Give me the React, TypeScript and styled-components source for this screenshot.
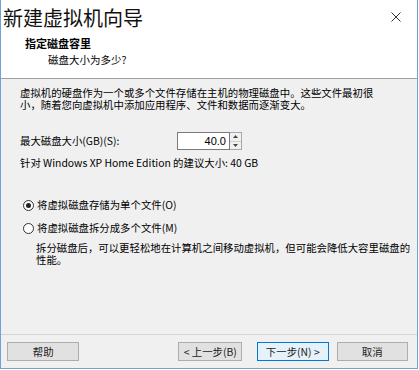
import React from "react";
import styled, { createGlobalStyle } from "styled-components";

const Global = createGlobalStyle`
  html, body { margin: 0; padding: 0; background: #ffffff; }
  body { font-family: "Noto Sans CJK SC", "Liberation Sans", sans-serif; }
`;

const Window = styled.div`
  box-sizing: border-box;
  width: 418px;
  height: 369px;
  display: flex;
  flex-direction: column;
  border: 1px solid #6fa3d8;
  border-top: none;
  background: #f0f0f0;
  color: #000;
`;

const Header = styled.div`
  height: 78px;
  flex: none;
  background: #ffffff;
  border-bottom: 1px solid #a0a0a0;
  display: flex;
  flex-direction: column;
`;

const TitleBar = styled.div`
  display: flex;
  align-items: center;
  justify-content: space-between;
  height: 36px;
  padding: 0 16px 0 2px;
`;

const Title = styled.div`
  font-size: 20px;
  line-height: 24px;
  color: #111;
`;

const Close = styled.svg`
  width: 10px;
  height: 10px;
  margin-top: -2px;
`;

const StepTitle = styled.div`
  font-size: 11px;
  font-weight: bold;
  line-height: 13px;
  padding-left: 24px;
  margin-top: 1px;
`;

const StepSub = styled.div`
  font-size: 10.5px;
  line-height: 13px;
  padding-left: 47px;
  margin-top: 3px;
`;

const Body = styled.div`
  flex: 1;
  display: flex;
  flex-direction: column;
  padding: 8px 0 0 19px;
  font-size: 10.4px;
  line-height: 12px;
  white-space: nowrap;
`;

const Para = styled.div``;

const SizeRow = styled.div`
  display: flex;
  align-items: center;
  margin-top: 21px;
  height: 18px;
`;

const Label = styled.div`
  width: 157px;
`;

const Spin = styled.div`
  display: flex;
  height: 18px;
`;

const NumBox = styled.div`
  box-sizing: border-box;
  width: 53px;
  height: 18px;
  border: 1px solid #7a7a7a;
  background: #fff;
  text-align: right;
  padding-right: 3px;
  font-family: "Liberation Sans", sans-serif;
  font-size: 11px;
  line-height: 16px;
`;

const SpinBtns = styled.div`
  box-sizing: border-box;
  width: 12px;
  height: 18px;
  display: flex;
  flex-direction: column;
  border: 1px solid #a9a9a9;
  border-left: none;
  background: #f0f0f0;
`;

const SpinHalf = styled.div`
  flex: 1;
  display: flex;
  align-items: center;
  justify-content: center;
  &:first-child { border-bottom: 1px solid #cfcfcf; }
`;

const Hint = styled.div`
  margin-top: 7px;
`;

const RadioRow = styled.label<{ $gap: number }>`
  display: flex;
  align-items: center;
  margin-top: ${(p) => p.$gap}px;
  margin-left: 3px;
  gap: 3px;
`;

const RadioCircle = styled.span<{ $on?: boolean }>`
  box-sizing: border-box;
  width: 11px;
  height: 11px;
  border-radius: 50%;
  border: 1px solid #333;
  background: #fff;
  display: flex;
  align-items: center;
  justify-content: center;
  &::after {
    content: "";
    width: 5px;
    height: 5px;
    border-radius: 50%;
    background: ${(p) => (p.$on ? "#222" : "transparent")};
  }
`;

const Desc = styled.div`
  margin-top: 8px;
  padding-left: 16px;
`;

const Footer = styled.div`
  height: 34px;
  flex: none;
  border-top: 1px solid #d5d5d5;
  display: flex;
  align-items: flex-start;
  padding: 7px 9px 0 6px;
  box-sizing: border-box;
`;

const Btn = styled.div<{ $w: number; $primary?: boolean; $ml?: number }>`
  box-sizing: border-box;
  width: ${(p) => p.$w}px;
  height: 19px;
  margin-left: ${(p) => p.$ml ?? 0}px;
  border: 1px solid ${(p) => (p.$primary ? "#0078d7" : "#adadad")};
  background: ${(p) => (p.$primary ? "#e5f1fb" : "#e1e1e1")};
  font-size: 10.4px;
  line-height: 17px;
  text-align: center;
  color: #222;
  white-space: nowrap;
`;

export default function App() {
  return (
    <>
      <Global />
      <Window>
        <Header>
          <TitleBar>
            <Title>新建虚拟机向导</Title>
            <Close viewBox="0 0 10 10">
              <path d="M0.5 0.5 L9.5 9.5 M9.5 0.5 L0.5 9.5" stroke="#333" strokeWidth="1" />
            </Close>
          </TitleBar>
          <StepTitle>指定磁盘容里</StepTitle>
          <StepSub>磁盘大小为多少?</StepSub>
        </Header>
        <Body>
          <Para>
            虚拟机的硬盘作为一个或多个文件存储在主机的物理磁盘中。这些文件最初很
            <br />
            小，随着您向虚拟机中添加应用程序、文件和数据而逐渐变大。
          </Para>
          <SizeRow>
            <Label>最大磁盘大小(GB)(S):</Label>
            <Spin>
              <NumBox>40.0</NumBox>
              <SpinBtns>
                <SpinHalf>
                  <svg width="5" height="3" viewBox="0 0 5 3">
                    <path d="M0 3 L2.5 0 L5 3 Z" fill="#444" />
                  </svg>
                </SpinHalf>
                <SpinHalf>
                  <svg width="5" height="3" viewBox="0 0 5 3">
                    <path d="M0 0 L2.5 3 L5 0 Z" fill="#444" />
                  </svg>
                </SpinHalf>
              </SpinBtns>
            </Spin>
          </SizeRow>
          <Hint>针对 Windows XP Home Edition 的建议大小: 40 GB</Hint>
          <RadioRow $gap={30}>
            <RadioCircle $on />
            将虚拟磁盘存储为单个文件(O)
          </RadioRow>
          <RadioRow $gap={11}>
            <RadioCircle />
            将虚拟磁盘拆分成多个文件(M)
          </RadioRow>
          <Desc>
            拆分磁盘后，可以更轻松地在计算机之间移动虚拟机，但可能会降低大容里磁盘的
            <br />
            性能。
          </Desc>
        </Body>
        <Footer>
          <Btn $w={73}>帮助</Btn>
          <Btn $w={64} $ml={99}>&lt; 上一步(B)</Btn>
          <Btn $w={72} $ml={15} $primary>下一步(N) &gt;</Btn>
          <Btn $w={72} $ml={8}>取消</Btn>
        </Footer>
      </Window>
    </>
  );
}
